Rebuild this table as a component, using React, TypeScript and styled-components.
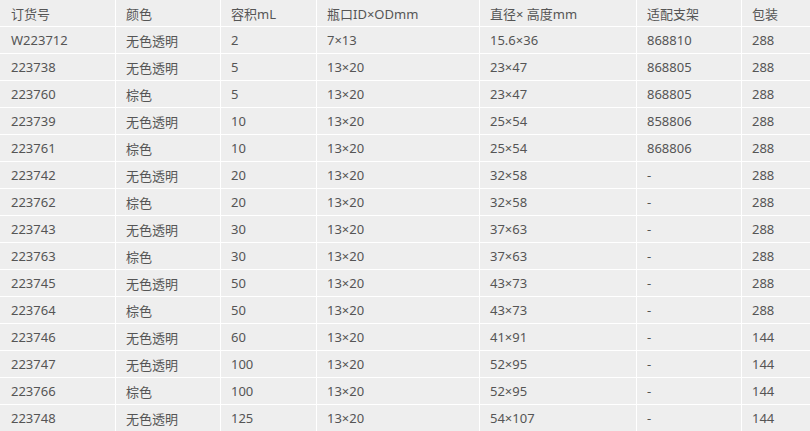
import React from "react";
import styled, { createGlobalStyle } from "styled-components";

const GlobalStyle = createGlobalStyle`
  html, body {
    margin: 0;
    padding: 0;
    background: #fff;
  }
`;

type Row = [string, string, string, string, string, string, string];

const headers: Row = ["订货号", "颜色", "容积mL", "瓶口ID×ODmm", "直径× 高度mm", "适配支架", "包装"];

const rows: Row[] = [
  ["W223712", "无色透明", "2", "7×13", "15.6×36", "868810", "288"],
  ["223738", "无色透明", "5", "13×20", "23×47", "868805", "288"],
  ["223760", "棕色", "5", "13×20", "23×47", "868805", "288"],
  ["223739", "无色透明", "10", "13×20", "25×54", "858806", "288"],
  ["223761", "棕色", "10", "13×20", "25×54", "868806", "288"],
  ["223742", "无色透明", "20", "13×20", "32×58", "-", "288"],
  ["223762", "棕色", "20", "13×20", "32×58", "-", "288"],
  ["223743", "无色透明", "30", "13×20", "37×63", "-", "288"],
  ["223763", "棕色", "30", "13×20", "37×63", "-", "288"],
  ["223745", "无色透明", "50", "13×20", "43×73", "-", "288"],
  ["223764", "棕色", "50", "13×20", "43×73", "-", "288"],
  ["223746", "无色透明", "60", "13×20", "41×91", "-", "144"],
  ["223747", "无色透明", "100", "13×20", "52×95", "-", "144"],
  ["223766", "棕色", "100", "13×20", "52×95", "-", "144"],
  ["223748", "无色透明", "125", "13×20", "54×107", "-", "144"],
];

export default function App() {
  return (
    <>
      <GlobalStyle />
      <Table>
        {headers.map((h, i) => (
          <Cell key={"h" + i} $head>
            {h}
          </Cell>
        ))}
        {rows.map((r, ri) =>
          r.map((c, ci) => <Cell key={ri + "-" + ci}>{c}</Cell>)
        )}
      </Table>
    </>
  );
}

const Table = styled("div")`
  display: grid;
  grid-template-columns: 115px 104px 95px 162px 156px 104px 68px;
  grid-auto-rows: 26px;
  gap: 1px;
  width: 810px;
  background: #fff;
  font-family: "Noto Sans", "Noto Sans CJK SC", sans-serif;
  font-size: 13px;
  color: #555;
`;

const Cell = styled("div")<{ $head?: boolean }>`
  background: #eeeeee;
  display: flex;
  align-items: center;
  padding: 0 10px;
  white-space: nowrap;
  overflow: hidden;
  &:nth-child(7n + 1) {
    padding-left: 11px;
  }
`;
